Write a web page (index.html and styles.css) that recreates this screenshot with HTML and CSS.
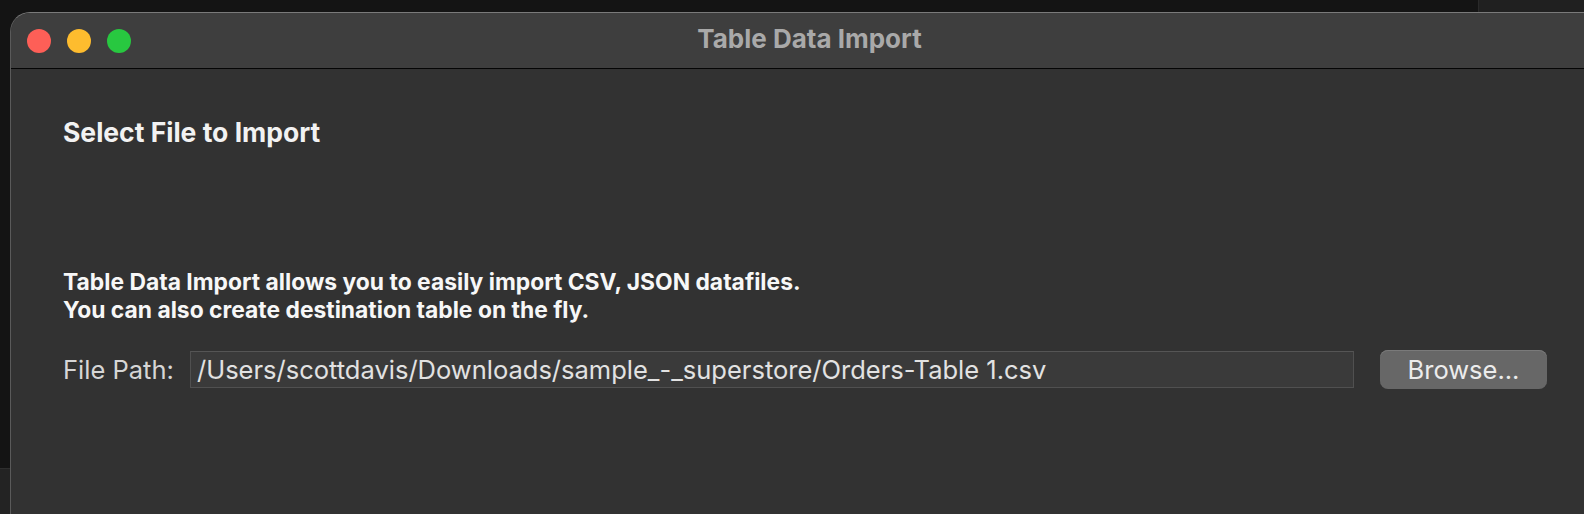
FILE: index.html
```html
<!DOCTYPE html>
<html>
<head>
<meta charset="utf-8">
<link rel="stylesheet" href="styles.css">
</head>
<body>
<div class="desk">
  <div class="behind-left"></div>
  <div class="behind-right"></div>
  <div class="window">
    <div class="titlebar">
      <div class="lights">
        <span class="light red"></span>
        <span class="light yellow"></span>
        <span class="light green"></span>
      </div>
      <div class="title">Table Data Import</div>
    </div>
    <div class="content">
      <h1 class="heading">Select File to Import</h1>
      <p class="desc">Table Data Import allows you to easily import CSV, JSON datafiles.<br>You can also create destination table on the fly.</p>
      <div class="row">
        <span class="label">File Path:</span>
        <div class="field">/Users/scottdavis/Downloads/sample_-_superstore/Orders-Table 1.csv</div>
        <button class="browse">Browse...</button>
      </div>
    </div>
  </div>
</div>
</body>
</html>
```

FILE: styles.css
```css
html, body {
  margin: 0;
  padding: 0;
  background: #141414;
  overflow: hidden;
  width: 1584px;
  height: 514px;
}
.desk {
  position: relative;
  width: 1584px;
  height: 514px;
  overflow: hidden;
}
.behind-left {
  position: absolute;
  left: 0;
  top: 468px;
  width: 10px;
  height: 46px;
  background: #232323;
  border-top: 1px solid #2e2e2e;
}
.behind-right {
  position: absolute;
  left: 1478px;
  top: 0;
  width: 106px;
  height: 12px;
  background: #202020;
  border-left: 1px solid #2a2a2a;
}
.window {
  position: absolute;
  left: 10px;
  top: 12px;
  width: 1598px;
  height: 520px;
  background: #323232;
  border-top: 1px solid #7a7a7a;
  border-left: 1px solid #5a5a5a;
  border-radius: 20px 0 0 0;
  box-sizing: border-box;
  overflow: hidden;
  font-family: Inter, "Noto Sans", sans-serif;
}
.titlebar {
  display: grid;
  align-items: center;
  height: 55px;
  background: #3e3e3e;
  border-bottom: 1px solid #050505;
}
.lights, .title {
  grid-area: 1 / 1;
}
.lights {
  display: flex;
  gap: 16px;
  padding-left: 16px;
  justify-self: start;
}
.light {
  width: 24px;
  height: 24px;
  border-radius: 50%;
  display: block;
}
.red { background: #fe5f57; }
.yellow { background: #febc2e; }
.green { background: #28c840; }
.title {
  justify-self: center;
  color: #a9a9a9;
  font-weight: 700;
  font-size: 26px;
  padding-bottom: 4px;
}
.content {
  padding: 47px 0 0 52px;
}
.heading {
  margin: 0;
  font-size: 26.5px;
  font-weight: 700;
  color: #f2f2f2;
  line-height: 32px;
}
.desc {
  margin: 120px 0 0 0;
  font-size: 22.85px;
  font-weight: 700;
  color: #f7f7f7;
  line-height: 28px;
}
.row {
  display: flex;
  align-items: center;
  margin-top: 26px;
}
.label {
  font-size: 25.5px;
  color: #d6d6d6;
  width: 127px;
  white-space: nowrap;
}
.field {
  width: 1164px;
  height: 37px;
  box-sizing: border-box;
  background: #3a3a3a;
  border: 1px solid #505050;
  border-top-color: #555;
  padding: 0 6px;
  font-size: 25.5px;
  line-height: 35px;
  color: #e2e2e2;
  white-space: nowrap;
  overflow: hidden;
}
.browse {
  margin-left: 26px;
  width: 167px;
  height: 39px;
  border: none;
  border-radius: 8px;
  background: #676767;
  box-shadow: inset 0 1px 0 #7a7a7a;
  color: #ececec;
  font-family: Inter, "Noto Sans", sans-serif;
  font-size: 25.5px;
  padding: 0;
}
```
